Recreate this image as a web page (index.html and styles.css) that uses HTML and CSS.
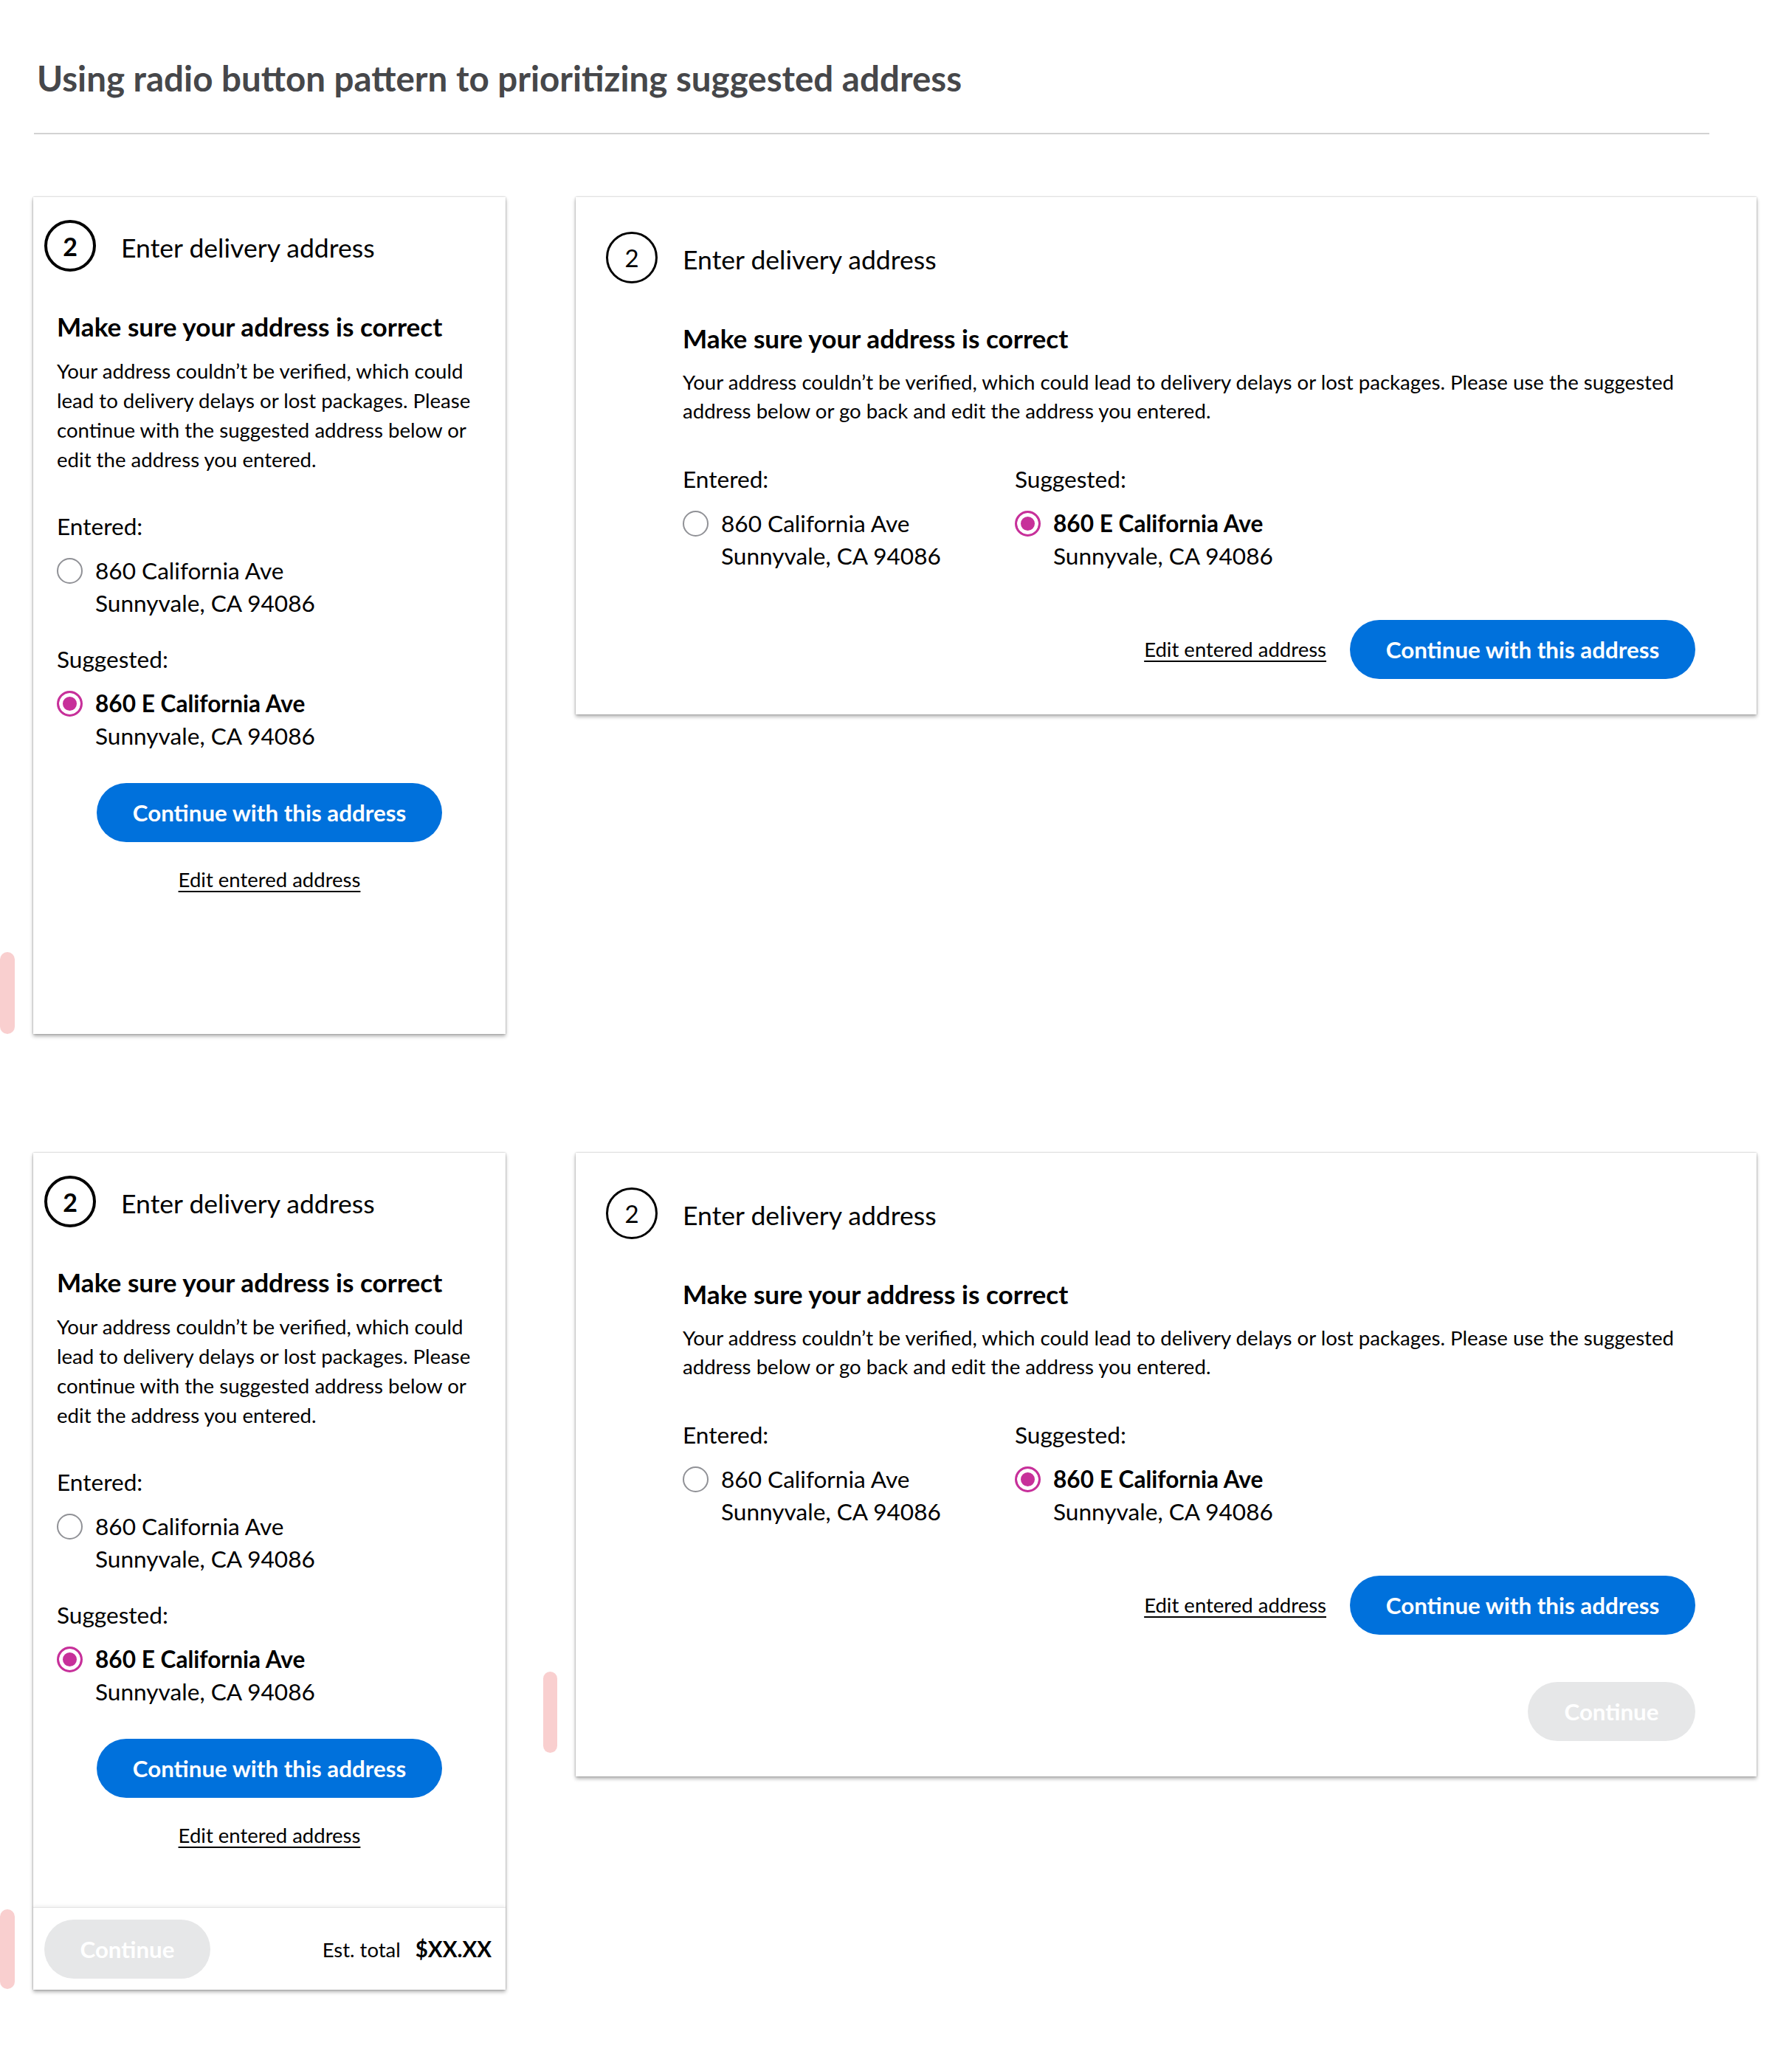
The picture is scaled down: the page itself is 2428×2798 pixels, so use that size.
FILE: index.html
```html
<!DOCTYPE html>
<html lang="en">
<head>
<meta charset="utf-8">
<title>Radio button pattern – suggested address</title>
<link rel="stylesheet" href="styles.css">
</head>
<body>
<div class="page">
  <h1 class="title">Using radio button pattern to prioritizing suggested address</h1>
  <hr class="rule">

  <div class="grid">
    <!-- Card 1: narrow -->
    <section class="card card-narrow">
      <div class="head">
        <span class="step step-bold">2</span>
        <span class="head-title">Enter delivery address</span>
      </div>
      <div class="body">
        <h2 class="msg-title">Make sure your address is correct</h2>
        <p class="msg-text">Your address couldn’t be verified, which could lead to delivery delays or lost packages. Please continue with the suggested address below or edit the address you entered.</p>
        <div class="label label-first">Entered:</div>
        <div class="option">
          <span class="radio"></span>
          <div class="addr"><div>860 California Ave</div><div>Sunnyvale, CA 94086</div></div>
        </div>
        <div class="label label-second">Suggested:</div>
        <div class="option">
          <span class="radio radio-on"></span>
          <div class="addr"><div class="strong">860 E California Ave</div><div>Sunnyvale, CA 94086</div></div>
        </div>
        <button class="btn btn-primary btn-block">Continue with this address</button>
        <a class="link link-center" href="#">Edit entered address</a>
      </div>
    </section>

    <!-- Card 2: wide -->
    <section class="card card-wide">
      <div class="head">
        <span class="step">2</span>
        <span class="head-title">Enter delivery address</span>
      </div>
      <div class="body">
        <h2 class="msg-title">Make sure your address is correct</h2>
        <p class="msg-text">Your address couldn’t be verified, which could lead to delivery delays or lost packages. Please use the suggested address below or go back and edit the address you entered.</p>
        <div class="cols">
          <div class="col">
            <div class="label">Entered:</div>
            <div class="option">
              <span class="radio"></span>
              <div class="addr"><div>860 California Ave</div><div>Sunnyvale, CA 94086</div></div>
            </div>
          </div>
          <div class="col">
            <div class="label">Suggested:</div>
            <div class="option">
              <span class="radio radio-on"></span>
              <div class="addr"><div class="strong">860 E California Ave</div><div>Sunnyvale, CA 94086</div></div>
            </div>
          </div>
        </div>
        <div class="actions">
          <a class="link" href="#">Edit entered address</a>
          <button class="btn btn-primary">Continue with this address</button>
        </div>
      </div>
    </section>

    <!-- Card 3: narrow with sticky footer -->
    <section class="card card-narrow">
      <div class="head">
        <span class="step step-bold">2</span>
        <span class="head-title">Enter delivery address</span>
      </div>
      <div class="body">
        <h2 class="msg-title">Make sure your address is correct</h2>
        <p class="msg-text">Your address couldn’t be verified, which could lead to delivery delays or lost packages. Please continue with the suggested address below or edit the address you entered.</p>
        <div class="label label-first">Entered:</div>
        <div class="option">
          <span class="radio"></span>
          <div class="addr"><div>860 California Ave</div><div>Sunnyvale, CA 94086</div></div>
        </div>
        <div class="label label-second">Suggested:</div>
        <div class="option">
          <span class="radio radio-on"></span>
          <div class="addr"><div class="strong">860 E California Ave</div><div>Sunnyvale, CA 94086</div></div>
        </div>
        <button class="btn btn-primary btn-block">Continue with this address</button>
        <a class="link link-center" href="#">Edit entered address</a>
      </div>
      <div class="footer">
        <button class="btn btn-disabled btn-footer">Continue</button>
        <div class="total"><span class="total-label">Est. total</span><span class="total-value">$XX.XX</span></div>
      </div>
    </section>

    <!-- Card 4: wide with extra disabled button -->
    <section class="card card-wide">
      <div class="head">
        <span class="step">2</span>
        <span class="head-title">Enter delivery address</span>
      </div>
      <div class="body">
        <h2 class="msg-title">Make sure your address is correct</h2>
        <p class="msg-text">Your address couldn’t be verified, which could lead to delivery delays or lost packages. Please use the suggested address below or go back and edit the address you entered.</p>
        <div class="cols">
          <div class="col">
            <div class="label">Entered:</div>
            <div class="option">
              <span class="radio"></span>
              <div class="addr"><div>860 California Ave</div><div>Sunnyvale, CA 94086</div></div>
            </div>
          </div>
          <div class="col">
            <div class="label">Suggested:</div>
            <div class="option">
              <span class="radio radio-on"></span>
              <div class="addr"><div class="strong">860 E California Ave</div><div>Sunnyvale, CA 94086</div></div>
            </div>
          </div>
        </div>
        <div class="actions">
          <a class="link" href="#">Edit entered address</a>
          <button class="btn btn-primary">Continue with this address</button>
        </div>
        <div class="actions actions-extra">
          <button class="btn btn-disabled btn-small">Continue</button>
        </div>
      </div>
    </section>
  </div>

  <span class="mark mark-1"></span>
  <span class="mark mark-2"></span>
  <span class="mark mark-3"></span>
</div>
</body>
</html>
```

FILE: styles.css
```css
* { box-sizing: border-box; }

html, body {
  margin: 0;
  padding: 0;
  background: #ffffff;
}

body {
  font-family: Lato, "Open Sans", "Liberation Sans", sans-serif;
  color: #000000;
}

.page {
  position: relative;
  padding: 76px 0 0 45px;
  min-height: 2798px;
}

.title {
  margin: 0 0 0 5px;
  font-size: 47.5px;
  line-height: 60px;
  font-weight: 700;
  color: #46474a;
}

.rule {
  margin: 44px 0 0 1px;
  width: 2270px;
  height: 2px;
  border: 0;
  background: #d2d2d2;
}

.grid {
  margin-top: 85px;
  display: grid;
  grid-template-columns: 640px 1600px;
  column-gap: 95px;
  row-gap: 161px;
  align-items: start;
}

/* ---------- card ---------- */
.card {
  background: #fff;
  display: flex;
  flex-direction: column;
  box-shadow: 0 0 2px rgba(0, 0, 0, 0.28), 0 3px 5px rgba(0, 0, 0, 0.32);
}

.card-narrow {
  height: 1134px;
  padding-top: 31px;
}

.card-wide {
  padding-top: 47px;
  padding-bottom: 48px;
}

.head {
  display: flex;
  align-items: center;
  gap: 34px;
}

.card-narrow .head { padding-left: 15px; }
.card-wide .head { padding-left: 41px; }

.step {
  width: 70px;
  height: 70px;
  border-radius: 50%;
  border: 3px solid #000;
  display: flex;
  align-items: center;
  justify-content: center;
  font-size: 33px;
  font-weight: 400;
  flex: none;
}

.step-bold {
  border-width: 4px;
  font-weight: 700;
  font-size: 34px;
}

.head-title {
  font-size: 35.6px;
  line-height: 44px;
  padding-top: 6px;
}

.card-narrow .body { padding: 0 32px; }
.card-wide .body { padding: 0 83px 0 145px; }

.msg-title {
  margin: 52px 0 0;
  font-size: 35.2px;
  line-height: 44px;
  font-weight: 700;
}

.msg-text {
  margin: 19px 0 0;
  font-size: 27.6px;
  line-height: 40px;
}

.card-wide .msg-text {
  line-height: 38.5px;
}

.label {
  font-size: 31.6px;
  line-height: 40px;
}

.label-first { margin-top: 50px; }
.label-second { margin-top: 34px; }

.cols {
  margin-top: 53px;
  display: grid;
  grid-template-columns: 450px 1fr;
}

.option {
  margin-top: 18px;
  display: flex;
  align-items: flex-start;
  gap: 17px;
}

.radio {
  flex: none;
  width: 35px;
  height: 35px;
  margin-top: 4.5px;
  border-radius: 50%;
  border: 2px solid #909196;
  background: #fff;
}

.radio-on {
  border: 3px solid #c7309a;
  background: #c7309a;
  box-shadow: inset 0 0 0 5px #fff;
}

.addr {
  font-size: 31.6px;
  line-height: 44px;
}

.strong { font-weight: 700; }

/* ---------- buttons & links ---------- */
.btn {
  font-family: inherit;
  border: 0;
  border-radius: 40px;
  height: 80px;
  font-size: 31.3px;
  font-weight: 700;
  color: #fff;
  padding: 0;
  white-space: nowrap;
  cursor: pointer;
}

.btn-primary { background: #0071dc; }
.btn-disabled { background: #e6e7e8; color: #fff; }

.btn-block {
  margin: 42px auto 0;
  width: 468px;
  display: block;
}

.link {
  color: #000;
  font-size: 27.5px;
  line-height: 40px;
  text-decoration: underline;
  text-decoration-thickness: 2px;
  text-underline-offset: 5px;
}

.link-center {
  display: block;
  margin-top: 31px;
  text-align: center;
}

.actions {
  margin-top: 65px;
  display: flex;
  justify-content: flex-end;
  align-items: center;
  gap: 32px;
}

.actions .btn-primary { width: 468px; }

.actions-extra { margin-top: 64px; }

.btn-small { width: 227px; }

/* ---------- footer ---------- */
.footer {
  margin-top: auto;
  height: 112px;
  border-top: 1px solid #e4e4e4;
  box-shadow: 0 -2px 4px rgba(0, 0, 0, 0.06);
  display: flex;
  align-items: center;
  justify-content: space-between;
  padding: 0 19px 0 15px;
}

.btn-footer { width: 225px; }

.total {
  display: flex;
  align-items: baseline;
  gap: 20px;
}

.total-label { font-size: 27.5px; }
.total-value { font-size: 29.5px; font-weight: 700; }

/* ---------- annotation marks ---------- */
.mark {
  position: absolute;
  width: 20px;
  border-radius: 10px;
  background: #f9cfcf;
}

.mark-1 { left: 0; top: 1290px; height: 111px; }
.mark-2 { left: 736px; top: 2265px; height: 110px; width: 19px; }
.mark-3 { left: 0; top: 2587px; height: 108px; }
```
